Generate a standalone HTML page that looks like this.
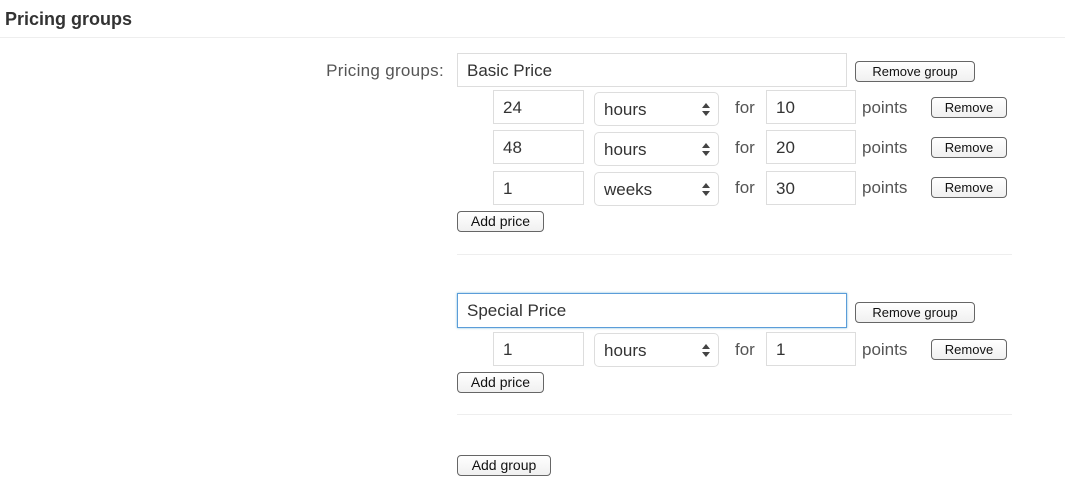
<!DOCTYPE html>
<html><head><style>
body{margin:0;width:1065px;height:500px;background:#fff;font-family:"Liberation Sans",sans-serif;position:relative;overflow:hidden;color:#444}
div,span{position:absolute;box-sizing:border-box}
.h{left:5px;top:9px;font-size:18px;font-weight:bold;color:#333}
.ln{height:1px;background:#eee}
.lbl{font-size:17px;color:#555;right:621px;top:61px;letter-spacing:0.3px}
.in{border:1px solid #ddd;background:#fff;font-size:17px;color:#333;padding-left:9px;line-height:34px}
.sel{border:1px solid #ddd;border-radius:5px;background:#fff;font-size:17px;color:#333;padding-left:9px;line-height:34px;width:125px;height:34px}
.sel:after{content:"";position:absolute;right:8px;top:10px;border:4px solid transparent;border-bottom:5px solid #444;border-top:none}
.sel:before{content:"";position:absolute;right:8px;top:18px;border:4px solid transparent;border-top:5px solid #444;border-bottom:none}
.btn{border:1px solid #666;border-radius:4px;background:linear-gradient(#fff,#f0f0f0);font-size:13px;color:#111;text-align:center;line-height:19px;height:21px}
.t{font-size:17px;color:#555}
</style></head><body>
<div class="h">Pricing groups</div>
<div class="ln" style="left:0;top:37px;width:1065px"></div>
<div class="lbl">Pricing groups:</div>

<div class="in" style="left:457px;top:53px;width:390px;height:34px">Basic Price</div>
<div class="btn" style="left:855px;top:61px;width:120px">Remove group</div>

<div class="in" style="left:493px;top:90px;width:91px;height:34px">24</div>
<div class="sel" style="left:594px;top:92px">hours</div>
<div class="t" style="left:735px;top:98px">for</div>
<div class="in" style="left:766px;top:90px;width:90px;height:34px">10</div>
<div class="t" style="left:862px;top:98px">points</div>
<div class="btn" style="left:931px;top:97px;width:76px">Remove</div>

<div class="in" style="left:493px;top:130px;width:91px;height:34px">48</div>
<div class="sel" style="left:594px;top:132px">hours</div>
<div class="t" style="left:735px;top:138px">for</div>
<div class="in" style="left:766px;top:130px;width:90px;height:34px">20</div>
<div class="t" style="left:862px;top:138px">points</div>
<div class="btn" style="left:931px;top:137px;width:76px">Remove</div>

<div class="in" style="left:493px;top:171px;width:91px;height:34px">1</div>
<div class="sel" style="left:594px;top:172px">weeks</div>
<div class="t" style="left:735px;top:178px">for</div>
<div class="in" style="left:766px;top:171px;width:90px;height:34px">30</div>
<div class="t" style="left:862px;top:178px">points</div>
<div class="btn" style="left:931px;top:177px;width:76px">Remove</div>

<div class="btn" style="left:457px;top:211px;width:87px;font-size:14px">Add price</div>
<div class="ln" style="left:457px;top:254px;width:555px"></div>

<div class="in" style="left:457px;top:293px;width:390px;height:35px;border:1px solid #5b9dd9;box-shadow:0 0 2px rgba(30,140,190,.6)">Special Price</div>
<div class="btn" style="left:855px;top:302px;width:120px">Remove group</div>

<div class="in" style="left:493px;top:332px;width:91px;height:34px">1</div>
<div class="sel" style="left:594px;top:333px">hours</div>
<div class="t" style="left:735px;top:340px">for</div>
<div class="in" style="left:766px;top:332px;width:90px;height:34px">1</div>
<div class="t" style="left:862px;top:340px">points</div>
<div class="btn" style="left:931px;top:339px;width:76px">Remove</div>

<div class="btn" style="left:457px;top:372px;width:87px;font-size:14px">Add price</div>
<div class="ln" style="left:457px;top:414px;width:555px"></div>

<div class="btn" style="left:457px;top:455px;width:94px;font-size:14px">Add group</div>
</body></html>
